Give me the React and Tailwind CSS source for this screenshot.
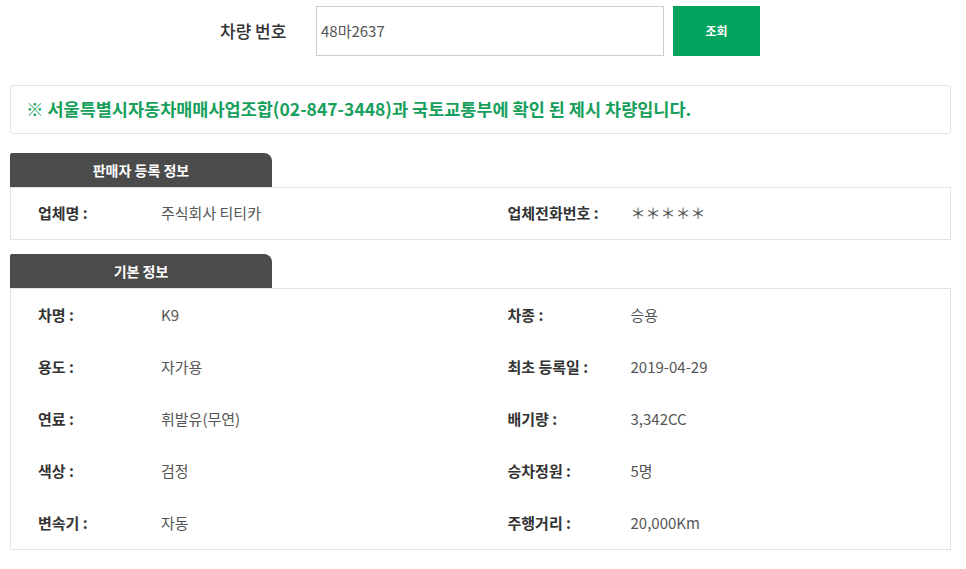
import React from 'react';

const font = { fontFamily: '"Noto Sans CJK KR", "Noto Sans", sans-serif' };

const sellerRows = [
    [
        { label: '업체명 :', value: '주식회사 티티카' },
        { label: '업체전화번호 :', value: '＊＊＊＊＊' }
    ]
];

const basicRows = [
    [
        { label: '차명 :', value: 'K9' },
        { label: '차종 :', value: '승용' }
    ],
    [
        { label: '용도 :', value: '자가용' },
        { label: '최초 등록일 :', value: '2019-04-29' }
    ],
    [
        { label: '연료 :', value: '휘발유(무연)' },
        { label: '배기량 :', value: '3,342CC' }
    ],
    [
        { label: '색상 :', value: '검정' },
        { label: '승차정원 :', value: '5명' }
    ],
    [
        { label: '변속기 :', value: '자동' },
        { label: '주행거리 :', value: '20,000Km' }
    ]
];

const Section = ({ title, rows, rowHeight }) => (
    <div>
        <div className="w-[262px] h-[34px] bg-[#4b4b4b] rounded-tr-[8px] rounded-tl-[2px] flex items-center justify-center text-white text-[14px] font-bold">
            {title}
        </div>
        <div className="border border-[#e3e3e3] bg-white">
            {rows.map((row, i) => (
                <div key={i} className={`grid grid-cols-2 ${rowHeight}`}>
                    {row.map((cell, j) => (
                        <div key={j} className="flex items-center pl-[27px]">
                            <span className="w-[123px] text-[15px] font-bold text-[#333]">{cell.label}</span>
                            <span className="text-[15px] text-[#555]">{cell.value}</span>
                        </div>
                    ))}
                </div>
            ))}
        </div>
    </div>
);

const App = () => {
    return (
        <div className="w-[966px] h-[569px] bg-white overflow-hidden" style={font}>
            {/* search bar */}
            <div className="flex items-center pt-[6px] pl-[220px]">
                <span className="text-[17px] font-medium text-[#333] w-[96px]">차량 번호</span>
                <div className="w-[348px] h-[50px] border border-[#cccccc] flex items-center pl-[4px] text-[15px] text-[#555]">
                    48마2637
                </div>
                <button className="ml-[9px] w-[87px] h-[50px] bg-[#03a35d] text-white text-[12px] font-bold">
                    조회
                </button>
            </div>

            <div className="px-[10px] w-[961px]">
                {/* notice */}
                <div className="mt-[29px] h-[49px] border border-[#e3e3e3] rounded-[3px] flex items-center pl-[15px] text-[17.5px] font-bold text-[#17a05c]">
                    ※ 서울특별시자동차매매사업조합(02-847-3448)과 국토교통부에 확인 된 제시 차량입니다.
                </div>

                <div className="mt-[19px]">
                    <Section title="판매자 등록 정보" rows={sellerRows} rowHeight="h-[51px]" />
                </div>

                <div className="mt-[14px]">
                    <Section title="기본 정보" rows={basicRows} rowHeight="h-[52px]" />
                </div>
            </div>
        </div>
    );
};

export default App;
